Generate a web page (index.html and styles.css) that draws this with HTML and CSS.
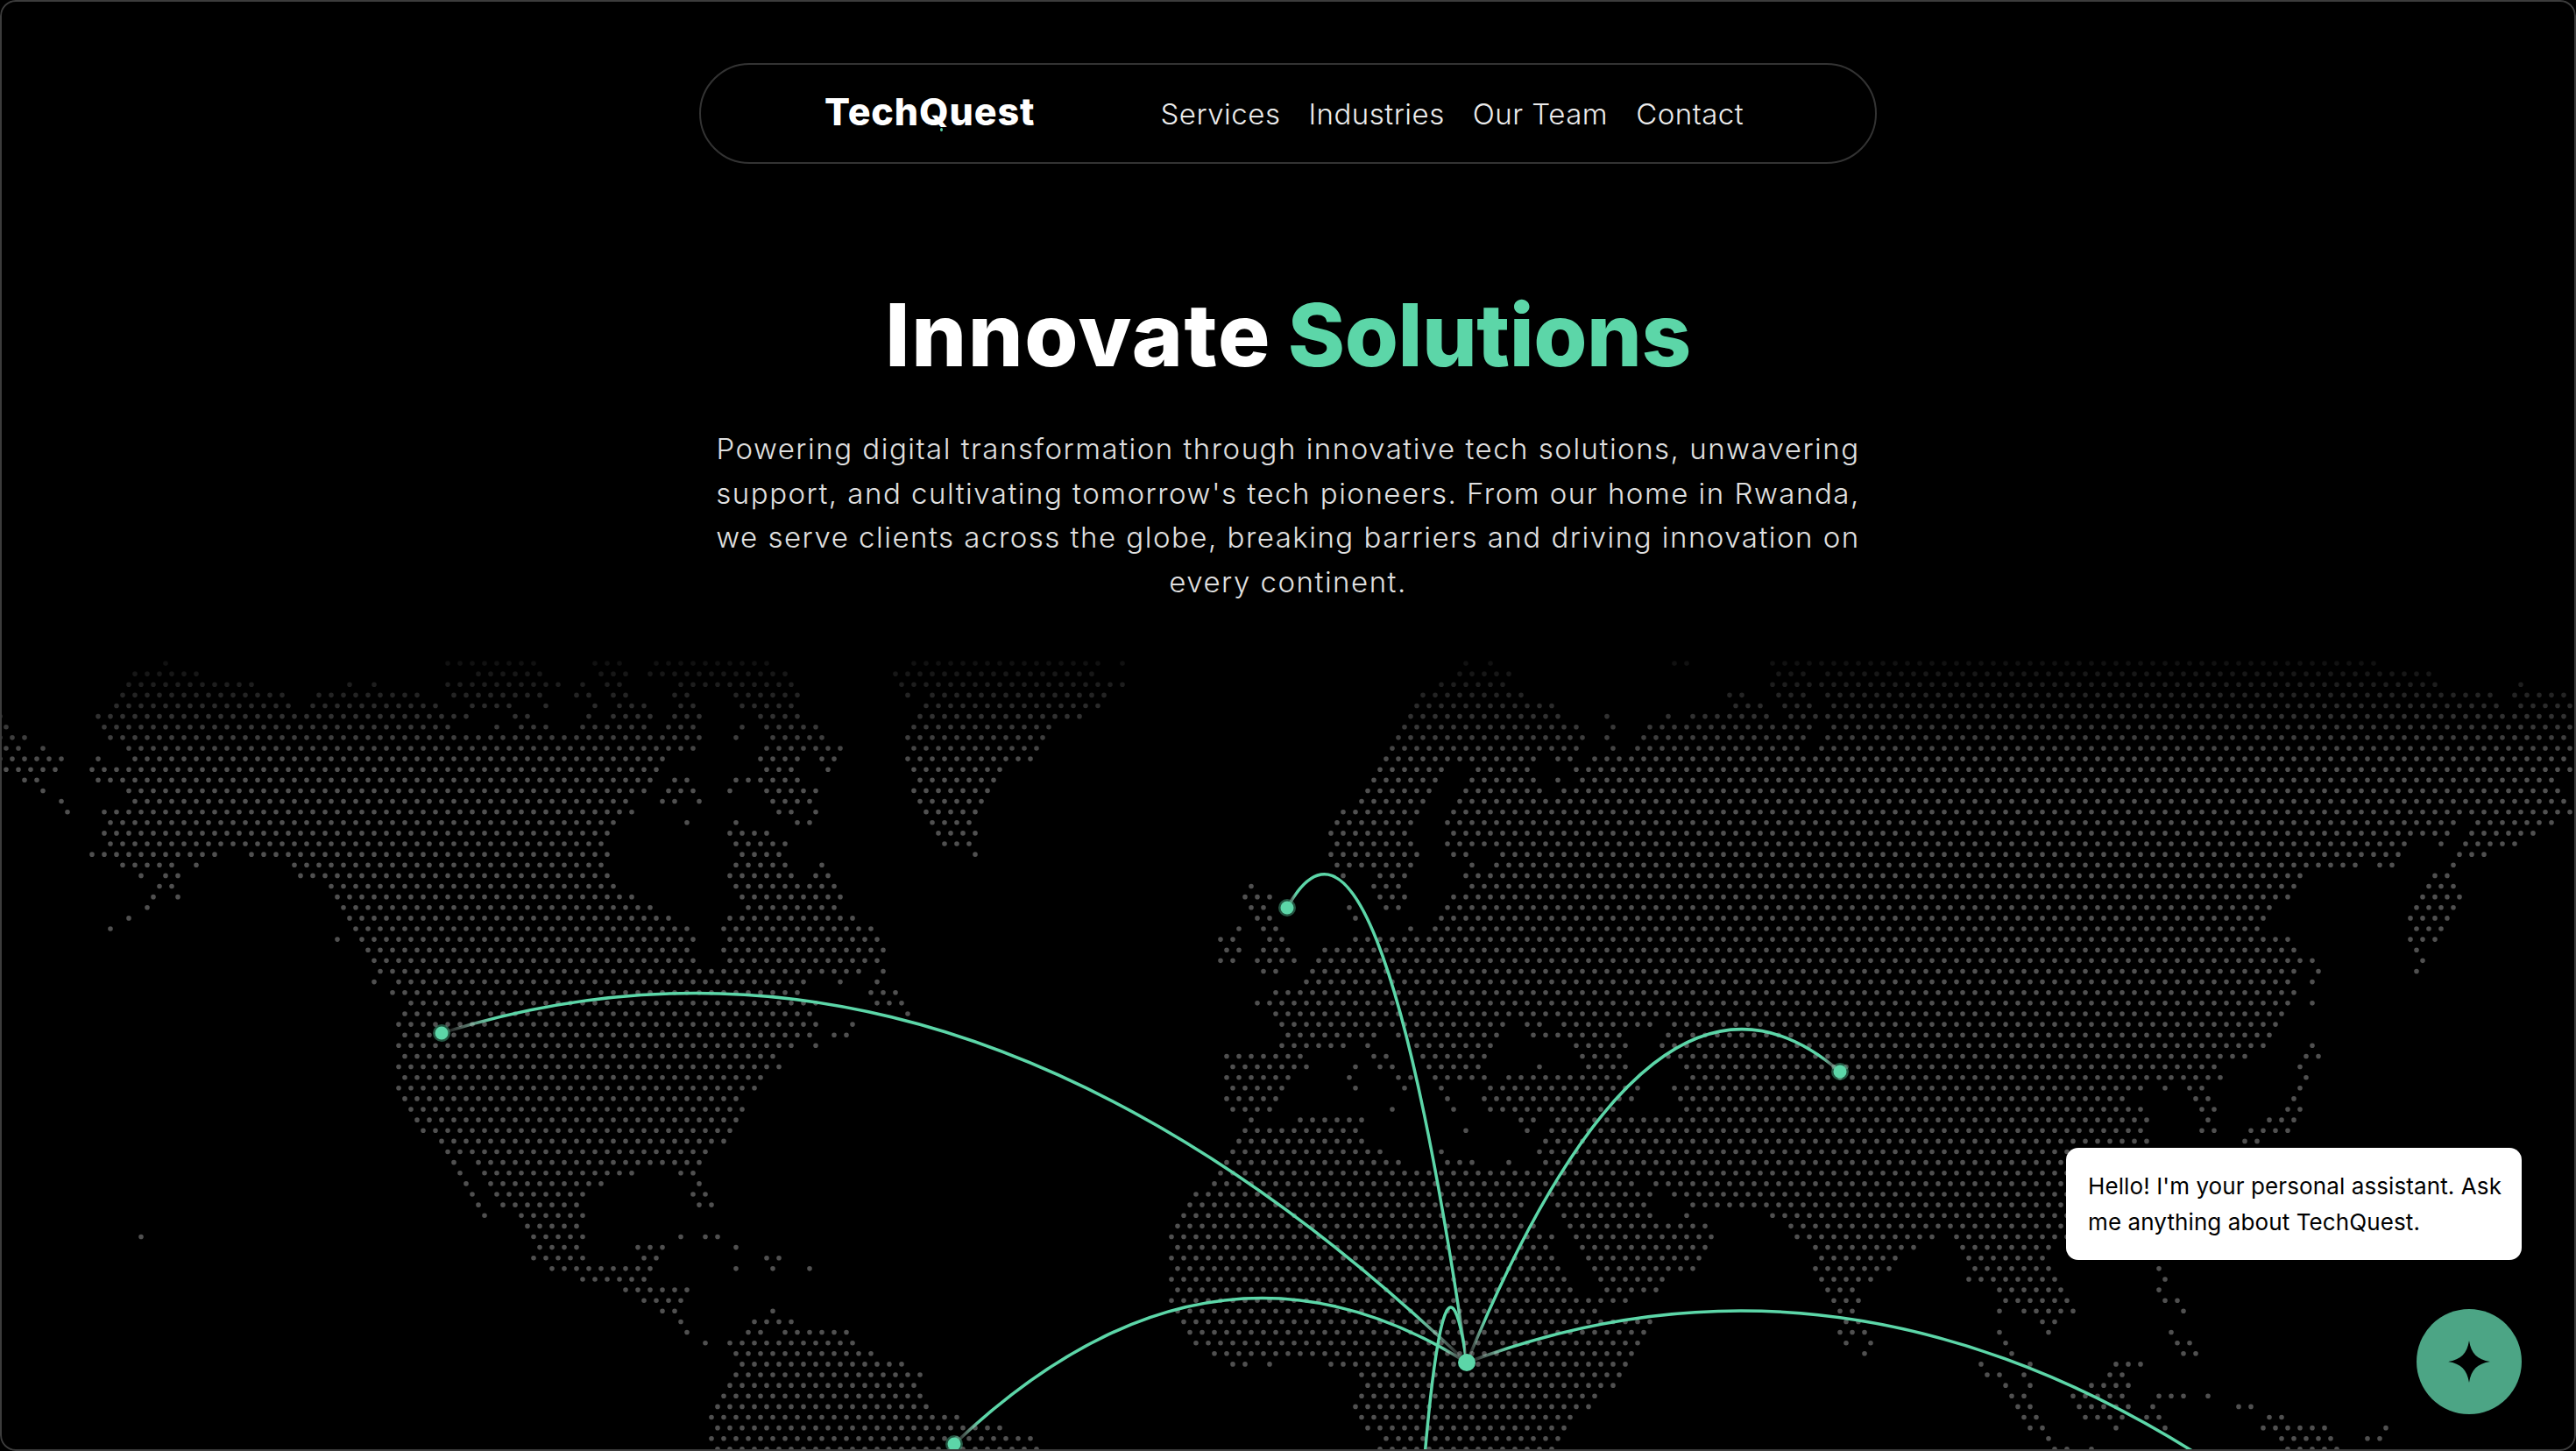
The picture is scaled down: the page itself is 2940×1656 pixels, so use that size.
FILE: index.html
```html
<!DOCTYPE html>
<html lang="en">
<head>
<meta charset="utf-8">
<title>TechQuest</title>
<link rel="stylesheet" href="styles.css">
</head>
<body>
<div class="frame">
  <nav class="nav">
    <a class="logo">TechQuest<span class="logo-dot"></span></a>
    <ul class="links">
      <li>Services</li>
      <li>Industries</li>
      <li>Our Team</li>
      <li>Contact</li>
    </ul>
  </nav>
  <header class="hero">
    <h1 class="title"><span class="word">Innovate</span> <span class="accent">Solutions</span></h1>
    <p class="lead">Powering digital transformation through innovative tech solutions, unwavering<br>support, and cultivating tomorrow's tech pioneers. From our home in Rwanda,<br>we serve clients across the globe, breaking barriers and driving innovation on<br>every continent.</p>
  </header>
  <svg class="map" viewBox="0 745 2940 911" xmlns="http://www.w3.org/2000/svg" aria-hidden="true">
    <defs>
      <linearGradient id="fade" x1="0" y1="0" x2="1" y2="0">
        <stop offset="0" stop-color="#fff" stop-opacity="0"/>
        <stop offset=".05" stop-color="#5cd6a8"/>
        <stop offset=".95" stop-color="#5cd6a8"/>
        <stop offset="1" stop-color="#fff" stop-opacity="0"/>
      </linearGradient>
      <linearGradient id="topfade" gradientUnits="userSpaceOnUse" x1="0" y1="727" x2="0" y2="874">
        <stop offset="0" stop-color="#000"/>
        <stop offset="1" stop-color="#fff"/>
      </linearGradient>
      <mask id="topmask" maskUnits="userSpaceOnUse" x="0" y="745" width="2940" height="911">
        <rect x="0" y="745" width="2940" height="911" fill="url(#topfade)"/>
      </mask>
    </defs>
    <path id="dots" class="dots" mask="url(#topmask)" d=""/>
    <g class="arcs">
      <path d="M1674 1555Q1089 995 504 1179"/>
      <path d="M1674 1555Q1571.5 852 1469 1036"/>
      <path d="M1674 1555Q1887 1039 2100 1223"/>
      <path d="M1674 1555Q1381.5 1371 1089 1648"/>
      <path d="M1674 1555Q1647.5 1371 1621 1724"/>
      <path d="M1674 1555Q2162 1371 2650 1761"/>
    </g>
    <g class="pins">
      <circle class="halo" cx="504" cy="1179" r="10"/><circle cx="504" cy="1179" r="7.5"/>
      <circle class="halo" cx="1469" cy="1036" r="10"/><circle cx="1469" cy="1036" r="7.5"/>
      <circle class="halo" cx="2100" cy="1223" r="10"/><circle cx="2100" cy="1223" r="7.5"/>
      <circle class="halo" cx="1089" cy="1648" r="10"/><circle cx="1089" cy="1648" r="7.5"/>
      <circle cx="1674" cy="1555" r="10"/>
    </g>
  </svg>
  <aside class="assistant">
    <p class="bubble">Hello! I'm your personal assistant. Ask<br>me anything about TechQuest.</p>
    <button class="fab" type="button" aria-label="Open assistant">
      <svg class="star" viewBox="0 0 24 24" xmlns="http://www.w3.org/2000/svg"><path d="M12 0C13.2 7.4 16.6 10.8 24 12 16.6 13.2 13.2 16.6 12 24 10.8 16.6 7.4 13.2 0 12 7.4 10.8 10.8 7.4 12 0Z"/></svg>
    </button>
  </aside>
</div>
<script src="map.js"></script>
</body>
</html>
```
FILE: styles.css
```css
* { box-sizing: border-box; }
html, body { margin: 0; background: #000; }
.frame {
  position: relative;
  height: 100vh;
  overflow: hidden;
  background: #000;
  border-radius: 18px;
  padding-top: 72px;
  color: #fff;
  font-family: Inter, "Liberation Sans", sans-serif;
}
.frame::after {
  content: "";
  position: absolute;
  inset: 0;
  border: 2px solid #3c3c3c;
  border-radius: inherit;
  pointer-events: none;
}
.nav {
  display: flex;
  align-items: center;
  width: 1344px;
  height: 115px;
  margin: 0 auto;
  padding-left: 141px;
  border: 2px solid #333;
  border-radius: 58px;
}
.logo {
  position: relative;
  font-size: 43px;
  font-weight: 800;
  letter-spacing: .9px;
  line-height: 1;
  margin-top: -4px;
}
.logo-dot {
  position: absolute;
  left: 132px;
  top: 40px;
  width: 3px;
  height: 4px;
  border-radius: 50%;
  background: #5cd6a8;
}
.links {
  display: flex;
  gap: 32px;
  margin: 0 0 0 143px;
  padding: 0;
  list-style: none;
  font-size: 33px;
  letter-spacing: .5px;
  font-weight: 300;
  color: #ececec;
}
.hero { text-align: center; }
.title {
  margin: 135px 0 0;
  font-size: 99px;
  line-height: 120px;
  font-weight: 800;
  word-spacing: -3px;
}
.word { letter-spacing: 1.6px; }
.accent { color: #5cd6a8; letter-spacing: -.5px; }
.lead {
  margin: 45px 0 0;
  font-size: 33px;
  letter-spacing: 1.5px;
  line-height: 50.6px;
  font-weight: 300;
  color: #e0e0e0;
}
.map {
  display: block;
  width: 2940px;
  height: 911px;
  margin-top: 56px;
}
.dots { fill: #505050; }
.arcs path { fill: none; stroke: url(#fade); stroke-width: 3.5; }
.pins circle { fill: #5cd6a8; }
.pins .halo { opacity: .4; }
.assistant {
  position: absolute;
  right: 62px;
  bottom: 42px;
  display: flex;
  flex-direction: column;
  align-items: flex-end;
  gap: 56px;
}
.bubble {
  width: 520px;
  height: 128px;
  margin: 0;
  padding: 23px 0 23px 25px;
  border-radius: 14px;
  background: #fff;
  color: #000;
  font-size: 26px;
  letter-spacing: .1px;
  line-height: 41px;
}
.fab {
  display: flex;
  align-items: center;
  justify-content: center;
  width: 120px;
  height: 120px;
  padding: 0;
  border: 0;
  border-radius: 50%;
  background: #4ca585;
}
.star { display: block; width: 48px; height: 48px; fill: #000; }
```
FILE: map.js
```js
// Dot-matrix world map. Each panel covers 980px of width; run values are in
// panel units (1.6 per page pixel). One string per grid row.
var panels = [
  { x0: 0, rows: [
    "302 815-978 1085-1130 1197-1400",
    "245-360 872-985 1097-1142 1187-1435",
    "235-460 638 683 815-1020 1064 1108-1130 1243-1445",
    "223-515 582-762 828-985 1052-1075 1120-1142 1232-1255 1344-1456",
    "212-527 571-795 862-930 997 1086 1130-1175 1243-1265 1355-1445",
    "0 179-850 940-963 1075 1120-1187 1232-1276 1388-1456",
    "10 190-818 907 952-997 1064-1175 1220-1265 1355 1400-1490",
    "0-45 201-1276 1344 1411-1500",
    "10-33 78 235-1265 1400-1535",
    "0-112 179 246-1210 1388-1456 1500-1523",
    "10-100 168-1198 1400-1445 1512",
    "44-67 179-1187 1232-1255 1344-1456",
    "78 235-1176 1220-1265 1332 1400-1490",
    "112 246-1142 1210-1232 1276 1411-1478",
    "123 190-1153 1422-1445 1490",
    "201-1120 1254 1344 1456-1478",
    "190-1108 1332-1400",
    "201-1097 1344-1434",
    "168-392 459-1108 1355-1422",
    "223-314 358 537-1097 1344-1434 1500",
    "257 302-325 548-1108 1332-1445 1490-1512",
    "291-314 605-1120 1344-1523",
    "280 325 616-1153 1355-1535",
    "268 627-1187 1366-1523",
    "235 638-1220 1332-1568",
    "201 650-1254 1321-1568",
    "616 660-1265 1332-1568",
    "672-1254 1321-1568",
    "683-1265 1332-1568",
    "695-1568",
    "683 728-1467 1535",
    "717-1456",
    "750-1490",
    "740-1478",
    "728-1490 1557",
    "740-1478 1523-1545",
    "728-1456 1490",
    "740-1411",
    "728-1422",
    "740-1388",
    "728-1377",
    "740-1344",
    "750-1355",
    "762-1344",
    "773-1332",
    "807-1322",
    "818-1288",
    "829 874-1276",
    "840 885-1153 1243-1265",
    "851 896-1097 1276",
    "862 907-1064 1265-1288",
    "874 918-1053 1276-1299",
    "885 952-1064",
    "963-1053",
    "257 974-1064 1243 1288-1310",
    "985-1053 1165-1210 1344",
    "974-1064 1176-1198 1400-1422",
    "1008-1187 1344 1411 1478",
    "1064-1176",
    "1142-1254",
    "1176-1243",
    "1210-1232 1411",
    "1243 1377-1445",
    "1254 1366-1388 1434-1545",
    "1288 1332-1568",
    "1344-1568",
    "1355-1568",
    "1344-1568",
    "1332-1568",
    "1322-1568",
    "1310-1568",
    "1299-1568",
    "1310-1568",
    "1299-1568",
    "1310-1568"
  ]},
  { x0: 980, rows: [
    "100-437 482 1108 1153 1490-1512",
    "67-427 1097-1187",
    "78-482 1064-1176",
    "90 134-448 1030-1210",
    "123-437 1019-1265",
    "112-403 1008-1276 1366 1478 1523-1568",
    "100-347 997-1310 1377 1445-1568",
    "90-336 985-1321 1366 1434-1568",
    "100-325 974-1310 1377 1422-1568",
    "90-314 963-1232 1276-1299 1344-1568",
    "100-257 952-1064 1131-1220 1310-1568",
    "112-246 940-1053 1120-1232 1276 1322-1568",
    "100-235 929-1041 1108-1243 1288-1568",
    "112-224 918-1030 1097-1568",
    "123-213 885-1019 1086-1568",
    "134-201 874-1008 1075-1568",
    "146-213 862-997 1086-1568",
    "157-201 874-1008 1075-1568",
    "213 862-1019 1086-1108 1176-1568",
    "874-1008 1120 1165-1568",
    "885 952-997 1108-1568",
    "717 940-985 1120-1568",
    "705-750 952-997 1086-1568",
    "717-740 896 963-985 1075-1568",
    "728-750 907 1064-1568",
    "0-22 695 740-762 1008 1053-1568",
    "10-33 660-683 750-773 907-1568",
    "0-45 672-695 740-785 851-1568",
    "10-33 660-683 728-796 840-1568",
    "0 45 740-773 829-1568",
    "33 818-1568",
    "22-67 762-1568",
    "33-78 728-1568",
    "90 762-1568",
    "773-1176 1220-1243 1288-1456 1490-1568",
    "785-942 985-1165 1232-1389 1478-1568",
    "773-885 929 1008-1153 1310-1400 1467-1568",
    "672-807 940-963 1030-1142 1322-1389 1478-1568",
    "683-818 907 952-975 1041-1131 1243 1332-1400 1512-1568",
    "672-785 896 985-1008 1053-1142 1187-1400 1523-1568",
    "683-773 907 997 1064 1153-1422 1490-1568",
    "672-762 1075 1142-1411 1500-1568",
    "683-750 975 1086 1153-1388 1512-1568",
    "717 807-918 1210-1232 1276-1568",
    "705-907 1108 1220 1265-1568",
    "695-918 1254-1568",
    "683-952 1064 1243-1568",
    "672-985 1075-1120 1187 1254-1568",
    "660-1568",
    "650-1410 1456-1568",
    "616-1445 1490-1568",
    "605-1210 1265-1434 1523-1568",
    "594-1210 1288-1445 1512",
    "582-1232 1299-1545",
    "570-1265 1310-1557",
    "582-1254 1322-1545",
    "570-1265 1332-1535",
    "582-1276 1344-1523",
    "570-1288 1355-1467",
    "582-1299 1366-1456",
    "570-1400",
    "582-1344",
    "594-1445",
    "605-1434",
    "616-1422",
    "0-22 650-1411",
    "10-78 683-705 750 862-1400",
    "0-112 918-1389",
    "10-100 929-1377",
    "0-112 918-1344",
    "10-123 907-1332",
    "0-179 918-1299",
    "10-257 929-1288",
    "0-314 963-1276",
    "10-325 950-1276"
  ]},
  { x0: 1960, rows: [
    "100-1198",
    "112-157 201-1299",
    "100-1310 1467",
    "22-45 112-157 201-1411 1456-1545",
    "33-78 123-168 212-1422 1467-1557",
    "22-90 134-1545",
    "10-168 212-1557",
    "0-157 201-1545",
    "10-146 190-1557",
    "0-1545",
    "10-1557",
    "0-1523",
    "10-1535",
    "0-1545",
    "10-1557",
    "0-1344 1388-1523",
    "10-1332 1377-1490",
    "0-1254 1321 1366-1456",
    "10-1243 1355-1400",
    "0-1165 1210-1232 1344",
    "10-1064 1310-1332",
    "0-1053 1299-1344",
    "10-1041 1288-1355",
    "0-1008 1276-1344",
    "10-997 1265-1332",
    "0-985 1276-1322",
    "10-1041 1265-1310",
    "0-1053 1276",
    "10-1086 1288",
    "0-1053 1097 1276",
    "10-1041 1086",
    "0-1053",
    "10-1041 1086",
    "0-1030",
    "10-1019",
    "0-1008",
    "10-997 1086",
    "0-963 1075-1097",
    "10-907 1064",
    "0-918 1075",
    "10-773 818 862-885 1064",
    "0-740 874-896 1053",
    "10-773 885-907 1041-1064",
    "0-785 896 1008-1053",
    "10-773 885-907 975-1041",
    "0-785 963-985",
    "10-640",
    "0-640",
    "10-640",
    "0-640",
    "10-640",
    "0-640",
    "100-640",
    "134-640",
    "146-392 437-640",
    "179-358 448-605",
    "190-325 459-594",
    "179-314 470-605 807",
    "190-280 459-616 818",
    "201-246 515-627 807",
    "212-257 526-638 818-840",
    "224-246 515 560-650 851",
    "235-257 594-616",
    "224-268 515 605 829",
    "235 280 526 840-862",
    "268 537 851-874",
    "481 570 728-773",
    "492-515 560 717-740",
    "526 570 683-750",
    "537-560 650-750 807-851 896",
    "548-570 660-750 795 952-975",
    "560-582 672-750 784-807 1008-1030",
    "570-594 728 818 997-1108 1220",
    "605 1030-1120 1187-1210",
    "616-638 683 1041-1131"
  ]}
];

var R = 2.8, d = [];
for (var i = 0; i < 75; i++) {
  var base = i % 2 ? 0 : 7, y = (757 + 12.12 * i).toFixed(2), seen = {};
  panels.forEach(function (p) {
    p.rows[i].split(" ").forEach(function (run) {
      var r = run.split("-");
      var a = p.x0 + (+r[0]) / 1.6, b = p.x0 + (+(r[1] || r[0])) / 1.6;
      for (var k = Math.ceil((a - 5 - base) / 14); base + 14 * k <= b + 5; k++) {
        if (seen[k]) continue;
        seen[k] = 1;
        var gx = base + 14 * k;
        d.push("M" + (gx - R) + " " + y + "a" + R + " " + R + " 0 1 0 " + 2 * R + " 0a" + R + " " + R + " 0 1 0 " + -2 * R + " 0");
      }
    });
  });
}
document.getElementById("dots").setAttribute("d", d.join(""));
```
